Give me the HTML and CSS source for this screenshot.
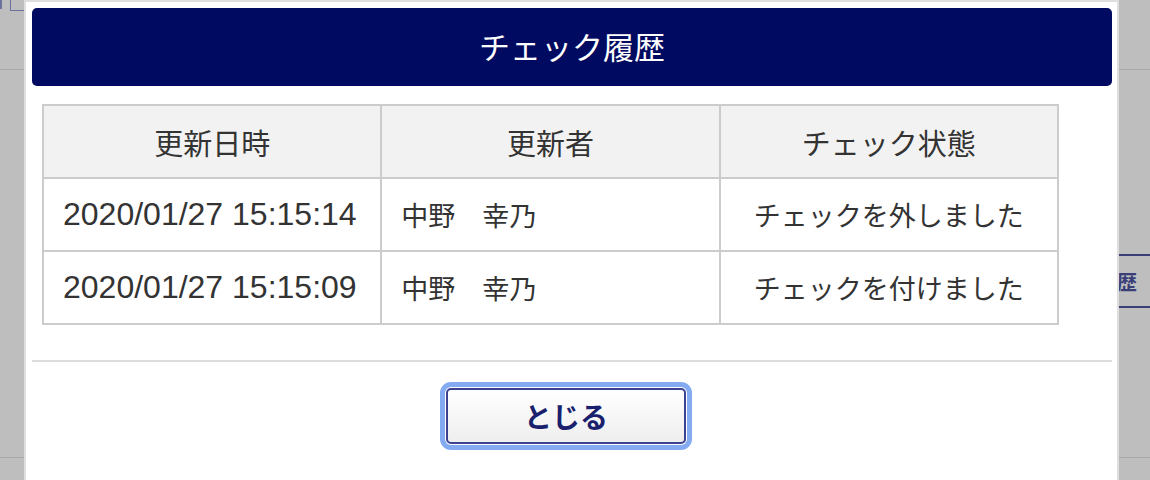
FILE: index.html
```html
<!DOCTYPE html>
<html lang="ja">
<head>
  <meta charset="UTF-8" />
  <title>チェック履歴</title>
  <link rel="stylesheet" href="styles.css">
</head>
<body>
<div class="page">
  <div class="page-top">
    <span class="mark"></span>
    <span class="box"></span>
  </div>
  <div class="page-body">
    <button class="history-btn">履歴</button>
  </div>
</div>

<div class="modal">
  <h1 class="modal-title">チェック履歴</h1>
  <div class="modal-body">
    <table class="history">
      <colgroup>
        <col class="col" /><col class="col" /><col class="col" />
      </colgroup>
      <thead>
        <tr>
          <th>更新日時</th>
          <th>更新者</th>
          <th>チェック状態</th>
        </tr>
      </thead>
      <tbody>
        <tr>
          <td class="date">2020/01/27 15:15:14</td>
          <td class="user">中野　幸乃</td>
          <td class="state">チェックを外しました</td>
        </tr>
        <tr>
          <td class="date">2020/01/27 15:15:09</td>
          <td class="user">中野　幸乃</td>
          <td class="state">チェックを付けました</td>
        </tr>
      </tbody>
    </table>
  </div>
  <div class="modal-footer">
    <button class="close-btn">とじる</button>
  </div>
</div>
</body>
</html>
```

FILE: styles.css
```css
html, body {
  margin: 0;
  height: 100%;
  overflow: hidden;
}

body {
  background: #bebebe;
  font-family: "Liberation Sans", "Noto Sans CJK JP", sans-serif;
  color: #333;
  position: relative;
}

/* page behind the dialog */
.page-top {
  height: 69px;
  border-bottom: 1px solid #a9a9a9;
  display: flex;
  align-items: flex-start;
  gap: 8px;
}
.mark {
  width: 2px;
  height: 9px;
  background: #6c709c;
}
.box {
  width: 14px;
  height: 10px;
  border-left: 1px solid #6c709c;
  border-bottom: 1px solid #6c709c;
}
.page-body {
  height: 387px;
  border-bottom: 1px solid #a9a9a9;
}
.history-btn {
  margin: 184px 0 0 1079px;
  width: 120px;
  height: 54px;
  padding: 0 0 0 16px;
  text-align: left;
  background: transparent;
  border: 2px solid #3b3f78;
  border-radius: 8px;
  font-family: "Noto Sans CJK JP", sans-serif;
  font-weight: bold;
  font-size: 20px;
  color: #3b3f78;
}

/* dialog */
.modal {
  position: absolute;
  top: 0;
  left: 24px;
  width: 1095px;
  height: 480px;
  background: #fff;
  border: 2px solid #dedede;
  border-bottom: none;
  padding: 6px 5px 0 6px;
  box-sizing: border-box;
  overflow: hidden;
}
.modal-title {
  margin: 0;
  height: 78px;
  line-height: 76px;
  background: #000a60;
  border-radius: 5px;
  color: #fff;
  text-align: center;
  font-family: "Noto Sans CJK JP", sans-serif;
  font-weight: normal;
  font-size: 31px;
}
.modal-body {
  padding: 18px 10px 35px;
}

.history {
  width: 1017px;
  table-layout: fixed;
  border-collapse: collapse;
  border: 2px solid #cccccc;
}
.col {
  width: 33.33%;
}
.history th,
.history td {
  border: 2px solid #cccccc;
  height: 71px;
  padding: 0 19px;
  box-sizing: border-box;
}
.history tr {
  height: 73px;
}
.history th {
  background: #f2f2f2;
  font-family: "Noto Sans CJK JP", sans-serif;
  font-weight: normal;
  font-size: 29px;
  text-align: center;
}
.history td {
  font-size: 27px;
}
.history .date {
  font-size: 32px;
}
.history .state {
  text-align: center;
}

.modal-footer {
  border-top: 2px solid #dddddd;
  padding: 26px 12px 0 0;
  display: flex;
  justify-content: center;
}
.close-btn {
  width: 240px;
  height: 56px;
  background: linear-gradient(#ffffff, #eeeeee);
  border: 2px solid #3d4290;
  border-radius: 5px;
  box-shadow: 0 0 0 1px #fff, 0 0 0 6px #84abf2;
  font-family: "Noto Sans CJK JP", sans-serif;
  font-weight: bold;
  font-size: 28px;
  color: #1a1f6e;
  padding: 0;
}
```
